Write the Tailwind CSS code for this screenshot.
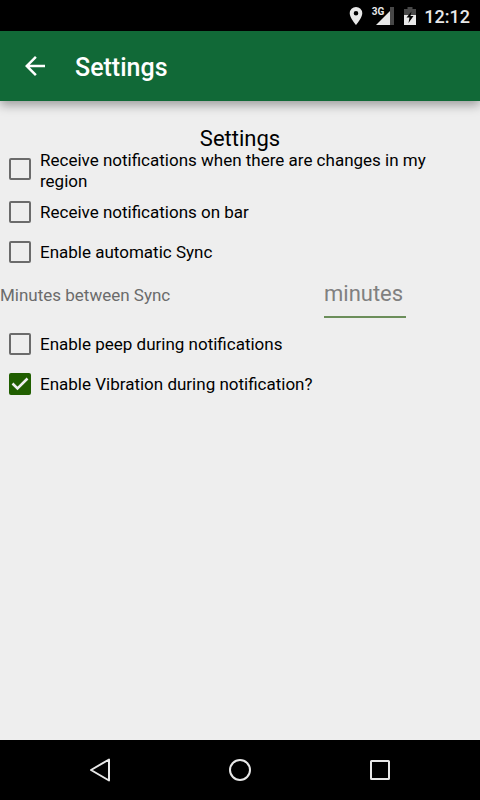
<!DOCTYPE html>
<html lang="en">
<head>
<meta charset="utf-8">
<meta name="viewport" content="width=device-width, initial-scale=1">
<title>Settings</title>
<script src="https://cdn.jsdelivr.net/npm/@tailwindcss/browser@4"></script>
</head>
<body class="flex min-h-screen flex-col bg-[#eeeeee] font-[Roboto,sans-serif] text-black">
  <!-- Status bar -->
  <div class="flex h-[31px] items-center justify-end bg-black pr-[10px] text-[#e8e8e8]">
    <svg class="mr-[9px] h-[18px] w-[14px]" viewBox="0 0 14 18" aria-hidden="true"><path fill="#e8e8e8" fill-rule="evenodd" d="M7 0a6.3 6.3 0 0 0-6.3 6.3C.7 11 7 18 7 18s6.300-7 6.300-11.700A6.300 6.300 0 0 0 7 0zm0 4a2.300 2.300 0 1 1 0 4.600A2.300 2.300 0 0 1 7 4z"/></svg>
    <span class="self-start pt-[6px] text-[10px] leading-[12px] font-bold">3G</span>
    <svg class="-ml-[8px] mr-[10px] h-[18px] w-[18px]" viewBox="0 0 18 18" aria-hidden="true"><path fill="#484848" d="M14 0h4v18h-4z"/><path fill="#e8e8e8" d="M18 0v0L14 4 0 18h14z"/><path fill="#484848" d="M14 0h4v18h-4z"/></svg>
    <svg class="mr-[8px] h-[18px] w-[12px]" viewBox="0 0 12 18" aria-hidden="true"><path fill="#484848" d="M3.500 0h5v2H12v7H0V2h3.500z"/><path fill="#e8e8e8" d="M0 8h12v10H0z"/><path fill="#000" d="M7.500 4.500 2.500 10.500h3L4.500 16l5-7H6.500z"/></svg>
    <span class="pt-[2px] text-[18px] leading-[20px] font-medium">12:12</span>
  </div>

  <!-- App bar -->
  <header class="flex h-[70px] items-center bg-[#116937] pl-[20px] text-white shadow-[0_4px_10px_rgba(0,0,0,0.35)]">
    <button type="button" aria-label="Back" class="flex h-[30px] w-[30px] items-center justify-center">
      <svg class="h-[30px] w-[30px]" viewBox="0 0 24 24" aria-hidden="true"><path fill="#fff" d="M20 11H7.830l5.590-5.590L12 4l-8 8 8 8 1.410-1.410L7.830 13H20v-2z"/></svg>
    </button>
    <span class="ml-[25px] pt-[4px] text-[25px] leading-[30px] font-medium">Settings</span>
  </header>

  <main class="flex-1 pt-[27px]">
    <h1 class="text-center text-[22px] leading-[22px]">Settings</h1>
    <form>
      <label class="flex min-h-[41px] items-center text-[17px] leading-[21px]">
        <span class="grid h-[38px] w-[40px] shrink-0 place-items-center self-start"><input type="checkbox" class="peer col-start-1 row-start-1 h-[22px] w-[22px] appearance-none rounded-[2px] border-2 border-[#6b6b6b] checked:border-[#205e00] checked:bg-[#205e00]"><svg class="invisible col-start-1 row-start-1 h-[22px] w-[22px] peer-checked:visible" viewBox="0 0 22 22" aria-hidden="true"><path fill="none" stroke="#eee" stroke-width="2.500" d="M3.500 10.500 8.500 15.500 18.500 5.500"/></svg></span>
        <span class="pr-[40px]">Receive notifications when there are changes in my region</span>
      </label>
      <label class="flex min-h-[40px] items-center text-[17px] leading-[21px]">
        <span class="grid w-[40px] shrink-0 place-items-center"><input type="checkbox" class="peer col-start-1 row-start-1 h-[22px] w-[22px] appearance-none rounded-[2px] border-2 border-[#6b6b6b] checked:border-[#205e00] checked:bg-[#205e00]"><svg class="invisible col-start-1 row-start-1 h-[22px] w-[22px] peer-checked:visible" viewBox="0 0 22 22" aria-hidden="true"><path fill="none" stroke="#eee" stroke-width="2.500" d="M3.500 10.500 8.500 15.500 18.500 5.500"/></svg></span>
        <span>Receive notifications on bar</span>
      </label>
      <label class="flex min-h-[40px] items-center text-[17px] leading-[21px]">
        <span class="grid w-[40px] shrink-0 place-items-center"><input type="checkbox" class="peer col-start-1 row-start-1 h-[22px] w-[22px] appearance-none rounded-[2px] border-2 border-[#6b6b6b] checked:border-[#205e00] checked:bg-[#205e00]"><svg class="invisible col-start-1 row-start-1 h-[22px] w-[22px] peer-checked:visible" viewBox="0 0 22 22" aria-hidden="true"><path fill="none" stroke="#eee" stroke-width="2.500" d="M3.500 10.500 8.500 15.500 18.500 5.500"/></svg></span>
        <span>Enable automatic Sync</span>
      </label>
      <div class="grid h-[52px] grid-cols-3 items-start">
        <label for="minutes" class="col-span-2 pt-[13px] text-[17px] leading-[21px] text-[#6b6b6b]">Minutes between Sync</label>
        <input id="minutes" type="text" inputmode="numeric" placeholder="minutes" class="ml-[4px] h-[46px] w-[82px] border-b-2 border-[#6b8e5a] bg-transparent pb-[2px] text-[22px] leading-[26px] outline-none placeholder:text-[#808080]">
      </div>
      <label class="flex min-h-[40px] items-center text-[17px] leading-[21px]">
        <span class="grid w-[40px] shrink-0 place-items-center"><input type="checkbox" class="peer col-start-1 row-start-1 h-[22px] w-[22px] appearance-none rounded-[2px] border-2 border-[#6b6b6b] checked:border-[#205e00] checked:bg-[#205e00]"><svg class="invisible col-start-1 row-start-1 h-[22px] w-[22px] peer-checked:visible" viewBox="0 0 22 22" aria-hidden="true"><path fill="none" stroke="#eee" stroke-width="2.500" d="M3.500 10.500 8.500 15.500 18.500 5.500"/></svg></span>
        <span>Enable peep during notifications</span>
      </label>
      <label class="flex min-h-[40px] items-center text-[17px] leading-[21px]">
        <span class="grid w-[40px] shrink-0 place-items-center"><input type="checkbox" checked class="peer col-start-1 row-start-1 h-[22px] w-[22px] appearance-none rounded-[2px] border-2 border-[#6b6b6b] checked:border-[#205e00] checked:bg-[#205e00]"><svg class="invisible col-start-1 row-start-1 h-[22px] w-[22px] peer-checked:visible" viewBox="0 0 22 22" aria-hidden="true"><path fill="none" stroke="#eee" stroke-width="2.500" d="M3.500 10.500 8.500 15.500 18.500 5.500"/></svg></span>
        <span>Enable Vibration during notification?</span>
      </label>
    </form>
  </main>

  <!-- System navigation -->
  <nav class="flex h-[60px] items-center justify-center gap-[110px] bg-black" aria-label="System">
    <button type="button" aria-label="Back" class="h-[30px] w-[30px]"><svg class="h-[30px] w-[30px]" viewBox="0 0 30 30" aria-hidden="true"><path fill="none" stroke="#e8e8e8" stroke-width="2" stroke-linejoin="round" d="M24 4.500v21L6 15z"/></svg></button>
    <button type="button" aria-label="Home" class="h-[30px] w-[30px]"><svg class="h-[30px] w-[30px]" viewBox="0 0 30 30" aria-hidden="true"><circle cx="15" cy="15" r="10" fill="none" stroke="#e8e8e8" stroke-width="2"/></svg></button>
    <button type="button" aria-label="Recent apps" class="h-[30px] w-[30px]"><svg class="h-[30px] w-[30px]" viewBox="0 0 30 30" aria-hidden="true"><rect x="6" y="6" width="18" height="18" rx=".5" fill="none" stroke="#e8e8e8" stroke-width="2"/></svg></button>
  </nav>
</body>
</html>
